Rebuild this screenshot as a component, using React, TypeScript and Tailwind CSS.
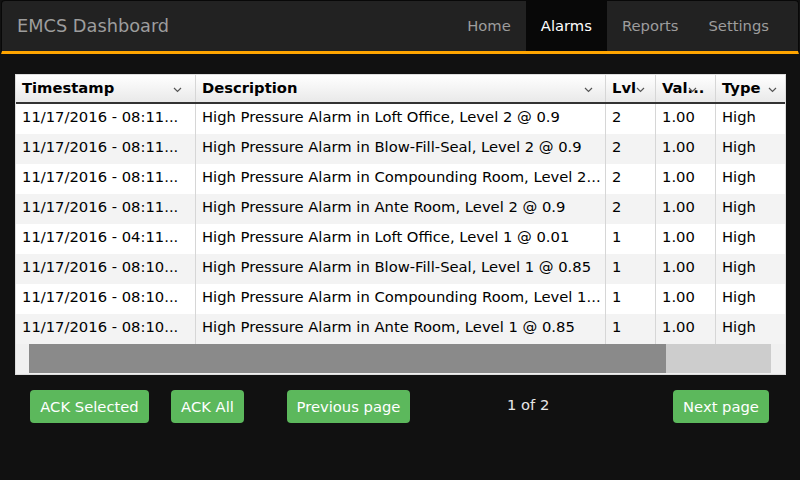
import React from "react";

const rows = [
  ["11/17/2016 - 08:11...", "High Pressure Alarm in Loft Office, Level 2 @ 0.9", "2", "1.00", "High"],
  ["11/17/2016 - 08:11...", "High Pressure Alarm in Blow-Fill-Seal, Level 2 @ 0.9", "2", "1.00", "High"],
  ["11/17/2016 - 08:11...", "High Pressure Alarm in Compounding Room, Level 2...", "2", "1.00", "High"],
  ["11/17/2016 - 08:11...", "High Pressure Alarm in Ante Room, Level 2 @ 0.9", "2", "1.00", "High"],
  ["11/17/2016 - 04:11...", "High Pressure Alarm in Loft Office, Level 1 @ 0.01", "1", "1.00", "High"],
  ["11/17/2016 - 08:10...", "High Pressure Alarm in Blow-Fill-Seal, Level 1 @ 0.85", "1", "1.00", "High"],
  ["11/17/2016 - 08:10...", "High Pressure Alarm in Compounding Room, Level 1...", "1", "1.00", "High"],
  ["11/17/2016 - 08:10...", "High Pressure Alarm in Ante Room, Level 1 @ 0.85", "1", "1.00", "High"],
];

const widths = ["w-[180px]", "w-[410px]", "w-[50px]", "w-[60px]", "w-[90px]"];

function Chevron() {
  return (
    <svg width="9" height="6" viewBox="0 0 9 6" className="shrink-0">
      <polyline points="1,1 4.5,4.5 8,1" fill="none" stroke="#555" strokeWidth="1.2" />
    </svg>
  );
}

const headers: { label: string; chev: string }[] = [
  { label: "Timestamp", chev: "right-[13px]" },
  { label: "Description", chev: "right-[12px]" },
  { label: "Lvl", chev: "right-[10px]" },
  { label: "Val...", chev: "right-[18px]" },
  { label: "Type", chev: "right-[28px]" },
];

export default function App() {
  return (
    <div className="w-[800px] h-[480px] bg-[#111111] font-['DejaVu_Sans',sans-serif] overflow-hidden">
      {/* Navbar */}
      <div className="mx-[1px] h-[54px] bg-[#222222] border border-[#080808] border-b-[3px] border-b-[#ffa500] rounded-t-[4px] flex items-stretch">
        <div className="flex items-center pl-[15px] text-[17.75px] text-[#9d9d9d]">EMCS Dashboard</div>
        <div className="ml-auto flex items-stretch pr-[14px] text-[14.75px]">
          <div className="flex items-center px-[15px] text-[#9d9d9d]">Home</div>
          <div className="flex items-center px-[15px] text-white bg-[#080808]">Alarms</div>
          <div className="flex items-center px-[15px] text-[#9d9d9d]">Reports</div>
          <div className="flex items-center px-[15px] text-[#9d9d9d]">Settings</div>
        </div>
      </div>

      {/* Table */}
      <div className="mt-[20px] ml-[15px] w-[771px] h-[301px] border border-[#dddddd] bg-white overflow-hidden flex flex-col">
        <div className="flex h-[29px] border-b-2 border-[#333333] bg-gradient-to-b from-white to-[#e9e9e9] shrink-0">
          {headers.map((h, i) => (
            <div
              key={i}
              className={`${widths[i]} shrink-0 relative flex items-center pl-[6px] border-r border-[#d6d6d6] text-[14.75px] font-bold text-black whitespace-nowrap overflow-hidden`}
            >
              <span>{h.label}</span>
              <span className={`absolute ${h.chev} top-[12px] flex`}>
                <Chevron />
              </span>
            </div>
          ))}
        </div>
        {rows.map((r, ri) => (
          <div key={ri} className={`flex h-[30px] shrink-0 ${ri % 2 === 1 ? "bg-[#f3f3f3]" : "bg-white"}`}>
            {r.map((c, ci) => (
              <div
                key={ci}
                className={`${widths[ci]} shrink-0 flex items-center px-[6px] pb-[4px] border-r border-[#d6d6d6] text-[14.75px] text-black whitespace-nowrap overflow-hidden`}
              >
                <span>{c}</span>
              </div>
            ))}
          </div>
        ))}
        <div className="h-[30px] shrink-0 bg-[#f0f0f0] flex pl-[13px] pr-[13px] pb-[1px]">
          <div className="w-[742px] bg-[#cdcdcd] flex">
            <div className="w-[637px] bg-[#8a8a8a]" />
          </div>
        </div>
      </div>

      {/* Buttons */}
      <div className="flex items-center mt-[15px] text-[14.75px]">
        <button className="ml-[30px] w-[119px] h-[33px] pt-[2px] rounded-[4px] bg-[#5cb85c] text-white">ACK Selected</button>
        <button className="ml-[22px] w-[73px] h-[33px] pt-[2px] rounded-[4px] bg-[#5cb85c] text-white">ACK All</button>
        <button className="ml-[43px] w-[123px] h-[33px] pt-[2px] rounded-[4px] bg-[#5cb85c] text-white">Previous page</button>
        <div className="ml-[97px] w-[42px] pb-[3px] text-[#e8e8e8] whitespace-nowrap">1 of 2</div>
        <button className="ml-[124px] w-[96px] h-[33px] pt-[2px] rounded-[4px] bg-[#5cb85c] text-white">Next page</button>
      </div>
    </div>
  );
}
